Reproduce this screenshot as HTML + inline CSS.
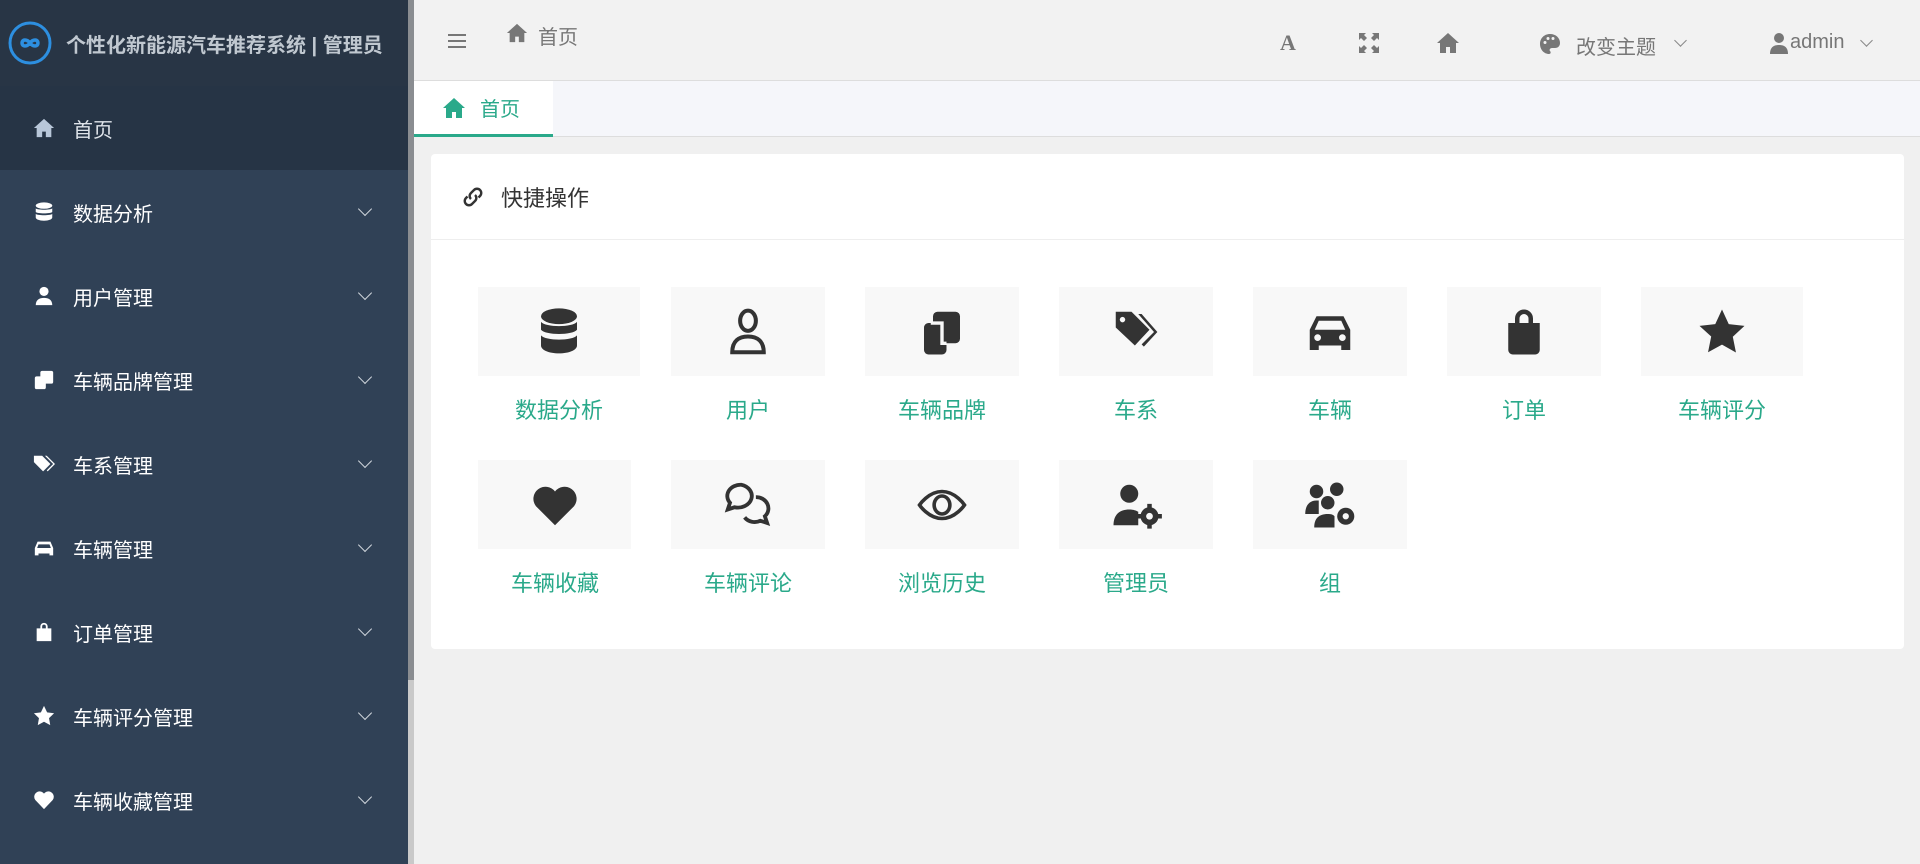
<!DOCTYPE html>
<html><head><meta charset="utf-8"><style>
*{margin:0;padding:0;box-sizing:border-box}
body{width:1920px;height:864px;overflow:hidden;background:#f0f0f0;font-family:"Liberation Sans","Noto Sans CJK SC",sans-serif;position:relative}
.side{position:absolute;left:0;top:0;width:408px;height:864px;background:#304156}
.sb{position:absolute;left:408px;top:0;width:6px;height:680px;background:#8a8d91}
.sbt{position:absolute;left:408px;top:680px;width:6px;height:184px;background:#c9c9c9}
.logo{height:86px;background:#283545;display:flex;align-items:center;padding-left:8px}
.logo span{color:#c0c8d0;font-weight:bold;font-size:20px;margin-left:14px;white-space:nowrap}
.mi{height:84px;display:flex;align-items:center;padding-left:33px;color:#fff;font-size:20px;position:relative}
.mi.h{background:#263445;color:#dfe4ea}
.mi svg{width:22px;height:22px;margin-right:18px;fill:#fff}
.mi .ch{position:absolute;left:360px;top:34px;width:10px;height:10px;border-right:1.5px solid #cfd5dc;border-bottom:1.5px solid #cfd5dc;transform:rotate(45deg)}
.top{position:absolute;left:414px;top:0;right:0;height:80px;background:#f2f2f2;color:#777}
.tabs{position:absolute;left:414px;top:80px;right:0;height:57px;background:#f5f6fa;border-top:1px solid #ddd;border-bottom:1px solid #ddd}
.tab{position:absolute;left:0;top:0;width:139px;height:56px;background:#fff;border-bottom:3px solid #2aa98a;color:#2aa98a;font-size:20px;display:flex;align-items:center;padding-left:28px}
.card{position:absolute;left:431px;top:154px;width:1473px;height:495px;background:#fff;border-radius:4px}
.ch2{height:86px;border-bottom:1px solid #eee;display:flex;align-items:center;padding-left:30px;font-size:22px;color:#333}
.tile{position:absolute;width:154px;height:89px;background:#f8f8f8;display:flex;align-items:center;justify-content:center}
.tile svg{width:54px;height:54px;fill:#333}
.lbl{position:absolute;width:154px;text-align:center;color:#2aa98a;font-size:22px}
.ti{position:absolute;fill:#777}
</style></head><body>
<div class="side">
<div class="logo"><svg width="44" height="44" viewBox="0 0 44 44"><circle cx="22" cy="22" r="20" fill="none" stroke="#2d8fe0" stroke-width="3"/><path d="M14 22c0-4 5-4 8 0s8 4 8 0-5-4-8 0-8 4-8 0z" fill="none" stroke="#2d8fe0" stroke-width="3.5"/></svg><span>个性化新能源汽车推荐系统 | 管理员</span></div>
<div class="mi h"><svg viewBox="0 0 24 24" style="fill:#b8c7d9"><path d="M12 2L1 12h3v10h6v-6h4v6h6V12h3z"/></svg>首页</div>
<div class="mi"><svg viewBox="0 0 24 24"><ellipse cx="12" cy="5" rx="9" ry="3.5"/><path d="M3 8c2 2 16 2 18 0v4c-2 2-16 2-18 0zM3 14c2 2 16 2 18 0v4c0 2-4 3.5-9 3.5S3 20 3 18z"/></svg>数据分析<i class="ch"></i></div>
<div class="mi"><svg viewBox="0 0 24 24"><circle cx="12" cy="7" r="5"/><path d="M3 22c0-6 4-8 9-8s9 2 9 8z"/></svg>用户管理<i class="ch"></i></div>
<div class="mi"><svg viewBox="0 0 24 24"><rect x="8" y="2" width="14" height="14" rx="2"/><rect x="2" y="8" width="12" height="14" rx="2"/></svg>车辆品牌管理<i class="ch"></i></div>
<div class="mi"><svg viewBox="0 0 24 24"><path d="M1 3h9l9 9-8 8-10-10zM13 3h2l9 9-8 8-1-1 7-7z"/></svg>车系管理<i class="ch"></i></div>
<div class="mi"><svg viewBox="0 0 24 24"><path d="M5 5h14l3 7v8h-4v-2H6v2H2v-8zM6 8l-1.5 4h15L18 8z"/></svg>车辆管理<i class="ch"></i></div>
<div class="mi"><svg viewBox="0 0 24 24"><path d="M8 8V6a4 4 0 018 0v2h4v14H4V8zm2 0h4V6a2 2 0 00-4 0z"/></svg>订单管理<i class="ch"></i></div>
<div class="mi"><svg viewBox="0 0 24 24"><path d="M12 1l3.4 7 7.6 1-5.5 5.3 1.3 7.7L12 18.3 5.2 22l1.3-7.7L1 9l7.6-1z"/></svg>车辆评分管理<i class="ch"></i></div>
<div class="mi"><svg viewBox="0 0 24 24"><path d="M12 22L2.5 12A5.5 5.5 0 0112 5a5.5 5.5 0 019.5 7z"/></svg>车辆收藏管理<i class="ch"></i></div>
</div>
<div class="sb"></div><div class="sbt"></div>
<div class="top">
<div style="position:absolute;left:34px;top:34px;width:18px;height:14px;border-top:2px solid #777;border-bottom:2px solid #777"><div style="margin-top:4px;height:2px;background:#777"></div></div>
<svg class="ti" style="left:92px;top:22px" width="22" height="22" viewBox="0 0 24 24"><path d="M12 2L1 12h3v10h6v-6h4v6h6V12h3z"/></svg>
<div style="position:absolute;left:124px;top:21px;font-size:20px;color:#777">首页</div>
<div style="position:absolute;left:866px;top:30px;font-size:22px;font-weight:bold;font-family:'Liberation Serif',serif">A</div>
<svg class="ti" style="left:945px;top:33px" width="20" height="20" viewBox="0 0 20 20"><path d="M0 0h7L5 2l3 3-3 3-3-3-2 2zM20 0v7l-2-2-3 3-3-3 3-3-2-2zM0 20v-7l2 2 3-3 3 3-3 3 2 2zM20 20h-7l2-2-3-3 3-3 3 3 2-2z"/></svg>
<svg class="ti" style="left:1022px;top:31px" width="24" height="24" viewBox="0 0 24 24"><path d="M12 2L1 12h3v10h6v-6h4v6h6V12h3z"/></svg>
<svg class="ti" style="left:1124px;top:32px" width="24" height="24" viewBox="0 0 24 24"><path d="M12 2C6 2 2 6.5 2 12s4 10 9 10c2 0 2-2 1-3s0-3 2-3h3c3 0 5-2 5-5 0-5-4-9-10-9zM7 12a1.5 1.5 0 110-3 1.5 1.5 0 010 3zm3-4a1.5 1.5 0 110-3 1.5 1.5 0 010 3zm5 0a1.5 1.5 0 110-3 1.5 1.5 0 010 3z"/></svg>
<div style="position:absolute;left:1162px;top:31px;font-size:20px">改变主题</div>
<div style="position:absolute;left:1262px;top:36px;width:9px;height:9px;border-right:1.5px solid #888;border-bottom:1.5px solid #888;transform:rotate(45deg)"></div>
<svg class="ti" style="left:1355px;top:32px" width="20" height="22" viewBox="0 0 20 22"><circle cx="10" cy="6" r="5"/><path d="M1 22c0-7 4-9 9-9s9 2 9 9z"/></svg>
<div style="position:absolute;left:1376px;top:31px;font-size:20px">admin</div>
<div style="position:absolute;left:1448px;top:36px;width:9px;height:9px;border-right:1.5px solid #888;border-bottom:1.5px solid #888;transform:rotate(45deg)"></div>
</div>
<div class="tabs"><div class="tab"><svg width="24" height="24" viewBox="0 0 24 24" style="fill:#2aa98a;margin-right:14px"><path d="M12 2L1 12h3v10h6v-6h4v6h6V12h3z"/></svg>首页</div></div>
<div class="card">
<div class="ch2"><svg width="24" height="24" viewBox="0 0 24 24" style="margin-right:16px" fill="none" stroke="#333" stroke-width="2.4"><path d="M10 14a4 4 0 010-6l3-3a4 4 0 016 6l-1.5 1.5M14 10a4 4 0 010 6l-3 3a4 4 0 01-6-6l1.5-1.5"/></svg>快捷操作</div>
</div>
<div class="tile" style="left:478px;top:287px;width:162px"><svg viewBox="0 0 24 24"><ellipse cx="12" cy="5" rx="8" ry="3.5"/><path d="M4 7.5c2 2.5 14 2.5 16 0v3.5c-2 2.5-14 2.5-16 0zM4 13.5c2 2.5 14 2.5 16 0V18c0 2-3.5 3.5-8 3.5S4 20 4 18z"/></svg></div>
<div class="lbl" style="left:482px;top:393px">数据分析</div>
<div class="tile" style="left:671px;top:287px"><svg viewBox="0 0 24 24" fill="none" stroke="#333" stroke-width="1.8" style="fill:none"><ellipse cx="12" cy="7" rx="3.5" ry="4.5"/><path d="M5 21c0-5 3-7 7-7s7 2 7 7z"/></svg></div>
<div class="lbl" style="left:671px;top:393px">用户</div>
<div class="tile" style="left:865px;top:287px"><svg viewBox="0 0 24 24"><rect x="8" y="3" width="12" height="14" rx="2"/><rect x="4" y="8" width="10" height="14" rx="2"/><path d="M7 8h5v9h2" fill="none" stroke="#f8f8f8" stroke-width="1.5"/></svg></div>
<div class="lbl" style="left:865px;top:393px">车辆品牌</div>
<div class="tile" style="left:1059px;top:287px"><svg viewBox="0 0 24 24"><path d="M3 3h7l8 8-6.5 7L3 10zM13 4h1.5l7 8-6 6.5-1-1 5.5-5.5z"/><circle cx="6" cy="6.5" r="1.2" fill="#f8f8f8"/></svg></div>
<div class="lbl" style="left:1059px;top:393px">车系</div>
<div class="tile" style="left:1253px;top:287px"><svg viewBox="0 0 24 24"><path d="M6 5h12l3 6v9h-4v-2H7v2H3v-9zM7 7l-1.8 4h13.6L17 7zM6.5 13a1.5 1.5 0 100 3 1.5 1.5 0 000-3zm11 0a1.5 1.5 0 100 3 1.5 1.5 0 000-3z"/></svg></div>
<div class="lbl" style="left:1253px;top:393px">车辆</div>
<div class="tile" style="left:1447px;top:287px"><svg viewBox="0 0 24 24"><path d="M8 8V6a4 4 0 018 0v2h3v12a2 2 0 01-2 2H7a2 2 0 01-2-2V8zm2 0h4V6a2 2 0 00-4 0z"/></svg></div>
<div class="lbl" style="left:1447px;top:393px">订单</div>
<div class="tile" style="left:1641px;top:287px;width:162px"><svg viewBox="0 0 24 24"><path d="M12 2l3 6.5 7 .8-5.2 4.8 1.4 7L12 17.6 5.8 21l1.4-7L2 9.3l7-.8z"/></svg></div>
<div class="lbl" style="left:1645px;top:393px">车辆评分</div>
<div class="tile" style="left:478px;top:460px;width:153px"><svg viewBox="0 0 24 24"><path d="M12 21L3.5 12.5A5 5 0 0112 6a5 5 0 018.5 6.5z"/></svg></div>
<div class="lbl" style="left:478px;top:566px">车辆收藏</div>
<div class="tile" style="left:671px;top:460px"><svg viewBox="0 0 24 24" style="fill:none" stroke="#333" stroke-width="1.7"><path d="M9 3a6 5 0 00-5 8l-1 3 3-1a6 5 0 103-10zM15.5 8.5a5.5 5 0 014 8.5l1 3-3-1a5.5 5 0 01-7-1.5"/></svg></div>
<div class="lbl" style="left:671px;top:566px">车辆评论</div>
<div class="tile" style="left:865px;top:460px"><svg viewBox="0 0 24 24" style="fill:none" stroke="#333" stroke-width="1.6"><path d="M2 12s4-6 10-6 10 6 10 6-4 6-10 6S2 12 2 12z"/><ellipse cx="12" cy="12" rx="3.5" ry="4"/></svg></div>
<div class="lbl" style="left:865px;top:566px">浏览历史</div>
<div class="tile" style="left:1059px;top:460px"><svg viewBox="0 0 24 24"><circle cx="9" cy="7" r="4"/><path d="M2 21c0-5 3-7 7-7 2 0 3 .5 4 1v6z"/><circle cx="18" cy="17" r="4"/><circle cx="18" cy="17" r="1.5" fill="#f8f8f8"/><path d="M17 11.5h2v2h-2zM17 20.5h2v2h-2zM12.5 16h2v2h-2zM21.5 16h2v2h-2z"/></svg></div>
<div class="lbl" style="left:1059px;top:566px">管理员</div>
<div class="tile" style="left:1253px;top:460px"><svg viewBox="0 0 24 24"><circle cx="6" cy="6" r="3"/><circle cx="15" cy="5" r="3"/><circle cx="11" cy="11" r="3"/><path d="M1 16c0-4 2-6 5-6h1v6zM5 22c0-4 2-6 6-6 1.5 0 2.5.3 3 1v5z"/><circle cx="19" cy="17" r="3.8"/><circle cx="19" cy="17" r="1.4" fill="#f8f8f8"/></svg></div>
<div class="lbl" style="left:1253px;top:566px">组</div>
</body></html>
